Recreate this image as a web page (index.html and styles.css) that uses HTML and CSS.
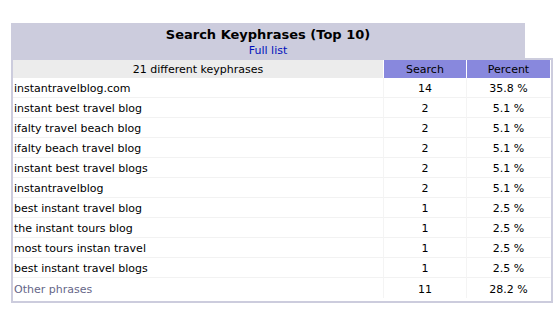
FILE: index.html
```html
<!DOCTYPE html>
<html>
<head>
<meta charset="utf-8">
<link rel="stylesheet" href="styles.css">
</head>
<body>
<div class="report">
  <div class="title">
    <div class="title-text">Search Keyphrases (Top 10)</div>
    <a class="full-link" href="#">Full list</a>
  </div>
  <div class="panel">
    <table class="data">
      <colgroup>
        <col class="c-kw"><col class="c-num"><col class="c-pct">
      </colgroup>
      <thead>
        <tr>
          <th class="h-kw">21 different keyphrases</th>
          <th class="h-num">Search</th>
          <th class="h-num">Percent</th>
        </tr>
      </thead>
      <tbody>
        <tr><td class="kw">instantravelblog.com</td><td>14</td><td>35.8 %</td></tr>
        <tr><td class="kw">instant best travel blog</td><td>2</td><td>5.1 %</td></tr>
        <tr><td class="kw">ifalty travel beach blog</td><td>2</td><td>5.1 %</td></tr>
        <tr><td class="kw">ifalty beach travel blog</td><td>2</td><td>5.1 %</td></tr>
        <tr><td class="kw">instant best travel blogs</td><td>2</td><td>5.1 %</td></tr>
        <tr><td class="kw">instantravelblog</td><td>2</td><td>5.1 %</td></tr>
        <tr><td class="kw">best instant travel blog</td><td>1</td><td>2.5 %</td></tr>
        <tr><td class="kw">the instant tours blog</td><td>1</td><td>2.5 %</td></tr>
        <tr><td class="kw">most tours instan travel</td><td>1</td><td>2.5 %</td></tr>
        <tr><td class="kw">best instant travel blogs</td><td>1</td><td>2.5 %</td></tr>
        <tr class="other"><td class="kw">Other phrases</td><td>11</td><td>28.2 %</td></tr>
      </tbody>
    </table>
  </div>
</div>
</body>
</html>
```

FILE: styles.css
```css
html, body {
  margin: 0;
  padding: 0;
  background: #ffffff;
}
body {
  font-family: "DejaVu Sans", Verdana, sans-serif;
  font-size: 11px;
  color: #000000;
}
.report {
  padding: 23px 0 0 11px;
}
.title {
  width: 514px;
  height: 34px;
  background: #ccccdd;
  text-align: center;
  padding-top: 3px;
}
.title-text {
  font-size: 13px;
  font-weight: bold;
  line-height: 18px;
}
.full-link {
  display: block;
  color: #0011bb;
  text-decoration: none;
  line-height: 13px;
}
.panel {
  width: 538px;
  margin-top: -2px;
  border: 2px solid #ccccdd;
  padding-bottom: 3px;
  background: #ffffff;
}
.data {
  width: 538px;
  border-collapse: separate;
  border-spacing: 0;
  table-layout: fixed;
}
.c-kw { width: 371px; }
.c-num { width: 83px; }
.c-pct { width: 84px; }
.data th {
  height: 18px;
  padding: 1px 0 0 0;
  font-weight: normal;
  border-right: 1px solid #ffffff;
  line-height: 17px;
  box-sizing: border-box;
}
.h-kw {
  background: #ececec;
}
.h-num {
  background: #8888dd;
}
.data td {
  height: 20px;
  box-sizing: border-box;
  padding: 2px 0 0 0;
  line-height: 17px;
  text-align: center;
  border-bottom: 1px solid #f2f2f2;
  border-right: 1px solid #f4f4f4;
}
.data td.kw {
  text-align: left;
  padding-left: 1px;
}
.data td:last-child {
  border-right: 1px solid #ffffff;
}
.data tr.other td {
  border-bottom: none;
}
.data tr.other td.kw {
  color: #666688;
}
```
